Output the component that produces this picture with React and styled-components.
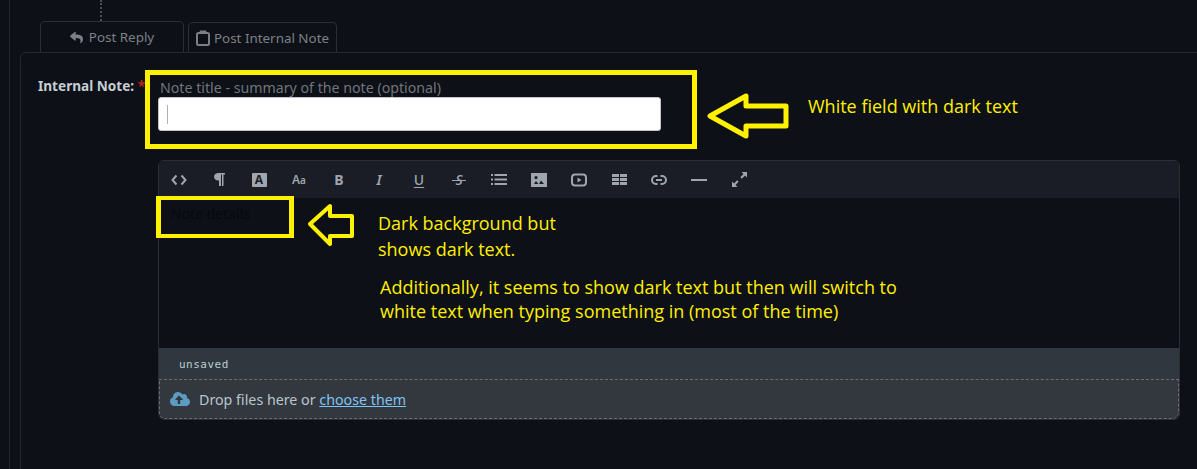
import React from "react"
import styled, { createGlobalStyle } from "styled-components"
import { FaReply, FaCloudUploadAlt } from "react-icons/fa"

const GlobalStyle = createGlobalStyle`
  html, body {
    margin: 0;
    background: #0d1017;
    overflow: hidden;
  }
  body {
    font-family: "Noto Sans", "Open Sans", sans-serif;
  }
`

const Page = styled.div`
  position: relative;
  width: 1197px;
  height: 469px;
  overflow: hidden;
`

const Thread = styled.div`
  margin-left: 9px;
  height: 469px;
  padding-left: 10px;
  border-left: 1px solid #24272e;
`

const Dots = styled.div`
  width: 0;
  height: 21px;
  margin-left: 80px;
  border-left: 2px dotted #4a4e55;
`

const Tabs = styled.div`
  display: flex;
  align-items: flex-end;
  gap: 4px;
  height: 31px;
  margin-left: 20px;
`

const Tab = styled.div`
  display: flex;
  align-items: center;
  justify-content: center;
  gap: ${p => p.$gap}px;
  box-sizing: border-box;
  width: ${p => p.$width}px;
  height: ${p => p.$height}px;
  border: 1px solid #2b2e35;
  border-bottom: 0;
  border-radius: 5px 5px 0 0;
  color: #7b8087;
  font-size: 13.4px;
`

const Panel = styled.div`
  box-sizing: border-box;
  display: flex;
  width: 1230px;
  height: 430px;
  padding: 25px 0 0 17px;
  border: 1px solid #24272e;
  border-radius: 6px;
`

const Label = styled.div`
  flex: none;
  width: 120px;
  color: #c6cdd4;
  font-size: 13.6px;
  font-weight: 700;
  line-height: 15px;
  span {
    color: #b3261e;
  }
`

const Fields = styled.div`
  width: 1022px;
`

const TitleHint = styled.div`
  padding-left: 2px;
  color: #71757b;
  font-size: 14.2px;
  line-height: 19px;
`

const TitleInput = styled.div`
  display: flex;
  align-items: center;
  box-sizing: border-box;
  width: 503px;
  height: 34px;
  padding-left: 8px;
  background: #fff;
  border: 1px solid #c4c4c4;
  border-radius: 3px;
`

const Caret = styled.div`
  width: 1px;
  height: 19px;
  background: #a9b3bd;
`

const Editor = styled.div`
  margin-top: 29px;
  border: 1px solid #2b2e35;
  border-radius: 6px;
  overflow: hidden;
`

const Toolbar = styled.div`
  display: flex;
  height: 37px;
  background: #1a1d25;
`

const ToolButton = styled.div`
  display: flex;
  align-items: center;
  justify-content: center;
  width: 40px;
  color: #9ea5ae;
`

const AccentBox = styled.span`
  display: flex;
  align-items: center;
  justify-content: center;
  width: 15px;
  height: 14px;
  background: #a0a6ae;
  border-radius: 1px;
  color: #1a1d25;
  font-size: 12px;
  font-weight: 700;
`

const ToolLetter = styled.span`
  color: #9ea5ae;
  font-size: ${p => p.$size || 14}px;
  font-weight: ${p => p.$weight || 700};
  font-style: ${p => (p.$italic ? "italic" : "normal")};
  text-decoration: ${p => p.$line || "none"};
  text-underline-offset: 2px;
  span {
    font-size: 10px;
  }
`

const StruckLetter = styled(ToolLetter)`
  position: relative;
  &::after {
    content: "";
    position: absolute;
    left: -3px;
    right: -3px;
    top: 50%;
    height: 1px;
    background: #9ea5ae;
  }
`

const Body = styled.div`
  box-sizing: border-box;
  height: 150px;
  padding: 6px 12px;
  background: #0d1017;
  color: #07090d;
  font-size: 14px;
  line-height: 20px;
`

const Status = styled.div`
  box-sizing: border-box;
  height: 31px;
  padding: 8px 20px 0;
  background: #30373e;
  color: #b8ced2;
  font-family: "DejaVu Sans Mono", monospace;
  font-size: 11px;
  letter-spacing: 0.5px;
  line-height: 18px;
`

const Drop = styled.div`
  display: flex;
  align-items: center;
  gap: 9px;
  box-sizing: border-box;
  height: 40px;
  padding-left: 10px;
  background: #33373e;
  border: 1px dashed #6a6e74;
  border-radius: 0 0 6px 6px;
  color: #b9c6cf;
  font-size: 14.25px;
  svg {
    color: #5b9cc2;
  }
  a {
    color: #7fc4f4;
    text-decoration: underline;
  }
`

const Marker = styled.div`
  position: absolute;
  box-sizing: border-box;
  left: ${p => p.$x}px;
  top: ${p => p.$y}px;
  width: ${p => p.$w}px;
  height: ${p => p.$h}px;
  border-style: solid;
  border-color: #fff200;
  border-width: ${p => p.$stroke};
`

const Arrow = styled.svg`
  position: absolute;
  left: ${p => p.$x}px;
  top: ${p => p.$y}px;
  overflow: visible;
`

const Note = styled.div`
  position: absolute;
  left: ${p => p.$x}px;
  top: ${p => p.$y}px;
  color: #ffef00;
  font-family: "Open Sans", sans-serif;
  font-size: 18px;
  line-height: ${p => p.$leading || 24}px;
  white-space: nowrap;
`

const Clipboard = () => (
  <svg width="14" height="16" viewBox="0 0 14 16" fill="none" stroke="currentColor" strokeWidth="2">
    <rect x="1" y="3" width="12" height="12" rx="1.5" />
    <path d="M4.5 3V1.2h5V3" fill="currentColor" strokeWidth="1.5" />
  </svg>
)

const tools = [
  <svg width="16" height="12" viewBox="0 0 16 12" fill="none" stroke="currentColor" strokeWidth="2"><path d="M5.500 1.500 1.500 6l4 4.500M10.500 1.500l4 4.500-4 4.500" /></svg>,
  <svg width="11" height="13" viewBox="0 0 11 13" fill="currentColor"><path d="M4.500 0H11v1.500H9.500V13H8V1.500H7V13H5V7.500h-.5C2 7.500 0 6 0 3.700S2 0 4.500 0z" /></svg>,
  <AccentBox>A</AccentBox>,
  <ToolLetter $size={12} $weight={600}>A<span>a</span></ToolLetter>,
  <ToolLetter>B</ToolLetter>,
  <ToolLetter $italic $weight={600}>I</ToolLetter>,
  <ToolLetter $weight={500} $line="underline">U</ToolLetter>,
  <StruckLetter $weight={500} $italic>S</StruckLetter>,
  <svg width="16" height="11" viewBox="0 0 16 11" fill="currentColor"><path d="M0 0h2v2H0zM0 4.500h2v2H0zM0 9h2v2H0zM3.500 0H16v2H3.500zM3.500 4.500H16v2H3.500zM3.500 9H16v2H3.500z" /></svg>,
  <svg width="16" height="14" viewBox="0 0 16 14" fill="currentColor" fillRule="evenodd"><path d="M0 0h16v14H0zM5 3a1.600 1.600 0 1 0 0 3.200A1.600 1.600 0 0 0 5 3zM5 8 3 11h4.500zM10 7.500 8 11h5z" /></svg>,
  <svg width="16" height="14" viewBox="0 0 16 14" fill="none"><rect x="1" y="1.500" width="14" height="11" rx="3" stroke="currentColor" strokeWidth="2" /><path d="M6.500 4.500 10.500 7l-4 2.500z" fill="currentColor" /></svg>,
  <svg width="15" height="11" viewBox="0 0 15 11" fill="currentColor"><path d="M0 0h7v3H0zM8 0h7v3H8zM0 4h7v3H0zM8 4h7v3H8zM0 8h7v3H0zM8 8h7v3H8z" /></svg>,
  <svg width="16" height="10" viewBox="0 0 16 10" fill="none" stroke="currentColor" strokeWidth="2"><path d="M6.500 1H5a4 4 0 0 0 0 8h1.500M9.500 1H11a4 4 0 0 1 0 8H9.500M5 5h6" /></svg>,
  <svg width="16" height="2" viewBox="0 0 16 2" fill="currentColor"><rect width="16" height="2" /></svg>,
  <svg width="15" height="15" viewBox="0 0 15 15" fill="currentColor"><path d="M9.500 0H15v5.500l-2-2-3.200 3.200-1.400-1.400L11.500 2zM5.500 15H0V9.500l2 2 3.200-3.200 1.400 1.400L3.500 13z" /></svg>,
]

export default function App() {
  return (
    <Page>
      <GlobalStyle />
      <Thread>
        <Dots />
        <Tabs>
          <Tab $width={144} $height={31} $gap={6}>
            <FaReply size={13} /> Post Reply
          </Tab>
          <Tab $width={149} $height={30} $gap={4}>
            <Clipboard /> Post Internal Note
          </Tab>
        </Tabs>
        <Panel>
          <Label>
            Internal Note: <span>*</span>
          </Label>
          <Fields>
            <TitleHint>Note title - summary of the note (optional)</TitleHint>
            <TitleInput>
              <Caret />
            </TitleInput>
            <Editor>
              <Toolbar>
                {tools.map((icon, i) => (
                  <ToolButton key={i}>{icon}</ToolButton>
                ))}
              </Toolbar>
              <Body>Note details</Body>
              <Status>unsaved</Status>
              <Drop>
                <FaCloudUploadAlt size={20} />
                <span>
                  Drop files here or <a>choose them</a>
                </span>
              </Drop>
            </Editor>
          </Fields>
        </Panel>
      </Thread>

      <Marker $x={145} $y={70} $w={552} $h={79} $stroke="5px" />
      <Arrow $x={706} $y={92} width="84" height="50">
        <path d="M4 24 40 4v10h40v20H40v10z" fill="none" stroke="#fff200" strokeWidth="5" strokeLinejoin="round" />
      </Arrow>
      <Note $x={808} $y={94}>White field with dark text</Note>

      <Marker $x={156} $y={196} $w={138} $h={42} $stroke="4px 5px" />
      <Arrow $x={306} $y={203} width="50" height="42">
        <path d="M4 21 24 3v10h22v20H24v8z" fill="none" stroke="#fff200" strokeWidth="4" strokeLinejoin="round" />
      </Arrow>
      <Note $x={378} $y={210} $leading={26}>
        Dark background but
        <br />
        shows dark text.
      </Note>
      <Note $x={380} $y={275}>
        Additionally, it seems to show dark text but then will switch to
        <br />
        white text when typing something in (most of the time)
      </Note>
    </Page>
  )
}
